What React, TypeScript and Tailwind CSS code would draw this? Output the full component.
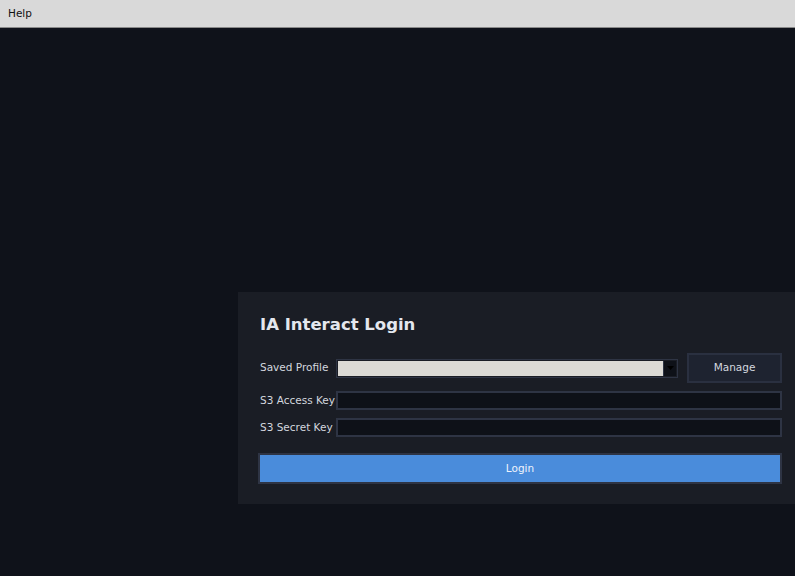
export default function App() {
  const font = { fontFamily: '"DejaVu Sans", "Liberation Sans", sans-serif' };
  return (
    <div className="h-screen w-full overflow-hidden bg-[#0f121a] flex flex-col" style={font}>
      {/* Menu bar */}
      <div className="h-[28px] shrink-0 bg-[#d9d9d9] border-b border-[#8a8a8a] flex items-center px-[8px]">
        <span className="text-[10.5px] text-[#111]">Help</span>
      </div>

      {/* Content */}
      <div className="flex-1 pt-[264px] pl-[238px]">
        <div className="bg-[#1a1d25] pl-[22px] pr-[13px] pt-[21px] pb-[20px]">
          <h1 className="text-[16.5px] font-bold text-[#e4e7ee] leading-[24px]">IA Interact Login</h1>

          <div className="mt-[16px] flex items-center h-[30px]">
            <span className="w-[76px] shrink-0 text-[10.5px] text-[#d3d7df]">Saved Profile</span>
            <div className="flex-1 h-[19px] flex border border-[#2e3444] bg-[#1a1d25] p-[1px]">
              <div className="flex-1 bg-[#dcdad5]" />
              <div className="w-[13px] flex items-center justify-center bg-[#0e1118] border-l border-[#2e3444]">
                <svg width="7" height="4" viewBox="0 0 7 4">
                  <path d="M0 0 L7 0 L3.5 4 Z" fill="#000" />
                </svg>
              </div>
            </div>
            <button className="ml-[9px] w-[95px] h-[30px] bg-[#1e2330] border-2 border-[#2a3040] text-[10.5px] text-[#d3d7df]">
              Manage
            </button>
          </div>

          <div className="mt-[8px] flex items-center h-[19px]">
            <span className="w-[76px] shrink-0 text-[10.5px] text-[#d3d7df]">S3 Access Key</span>
            <div className="flex-1 h-[19px] bg-[#0e1118] border-2 border-[#2e3444]" />
          </div>

          <div className="mt-[8px] flex items-center h-[19px]">
            <span className="w-[76px] shrink-0 text-[10.5px] text-[#d3d7df]">S3 Secret Key</span>
            <div className="flex-1 h-[19px] bg-[#0e1118] border-2 border-[#2e3444]" />
          </div>

          <button className="mt-[16px] -ml-[2px] w-[calc(100%+2px)] h-[31px] bg-[#4a8cdb] border-2 border-[#2e3444] text-[10.5px] text-[#eef3fb]">
            Login
          </button>
        </div>
      </div>
    </div>
  );
}
